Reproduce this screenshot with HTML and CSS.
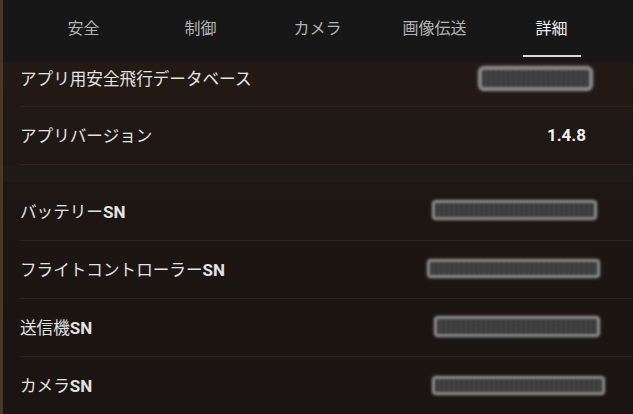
FILE: index.html
```html
<!DOCTYPE html>
<html lang="ja">
<head>
    <meta charset="UTF-8">
    <meta name="viewport" content="width=device-width, initial-scale=1.0">
    <title>詳細</title>
    <link rel="stylesheet" href="styles.css">
</head>
<body>
    <div class="panel">
        <nav class="tabs">
            <div class="tab">安全</div>
            <div class="tab">制御</div>
            <div class="tab">カメラ</div>
            <div class="tab">画像伝送</div>
            <div class="tab active">詳細</div>
        </nav>

        <div class="list">
            <div class="row first">
                <span class="label">アプリ用安全飛行データベース</span>
                <span class="redact r-db"></span>
            </div>
            <div class="row">
                <span class="label">アプリバージョン</span>
                <span class="value">1.4.8</span>
            </div>

            <div class="gap"></div>

            <div class="row">
                <span class="label">バッテリー<b>SN</b></span>
                <span class="redact r-bat"></span>
            </div>
            <div class="row">
                <span class="label">フライトコントローラー<b>SN</b></span>
                <span class="redact r-fc"></span>
            </div>
            <div class="row">
                <span class="label">送信機<b>SN</b></span>
                <span class="redact r-rc"></span>
            </div>
            <div class="row last">
                <span class="label">カメラ<b>SN</b></span>
                <span class="redact r-cam"></span>
            </div>
        </div>
    </div>
</body>
</html>
```

FILE: styles.css
```css
* {
    box-sizing: border-box;
}
html, body {
    margin: 0;
    height: 100%;
}
body {
    background: #1a1512;
    font-family: "Noto Sans CJK JP", "Noto Sans", sans-serif;
    color: #e4e4e4;
    overflow: hidden;
}
.panel {
    height: 414px;
    border-left: 3px solid #4a3825;
    background: linear-gradient(90deg, #1d1713 0%, #221a15 45%, #1c1613 100%);
}
.tabs {
    height: 62px;
    background: #171717;
    display: flex;
    padding: 0 23px 0 22px;
}
.tab {
    flex: 1;
    display: flex;
    align-items: flex-start;
    justify-content: center;
    padding-top: 15px;
    font-size: 16px;
    color: #b4b4b4;
    position: relative;
}
.tab.active {
    color: #f0f0f0;
}
.tab.active::after {
    content: "";
    position: absolute;
    left: 50%;
    bottom: 5px;
    width: 58px;
    margin-left: -29px;
    height: 2px;
    background: #d8d8d8;
}
.list {
    background: linear-gradient(180deg, #231a15 0%, #1d1613 40%, #1a1512 100%);
}
.row {
    height: 58px;
    margin-left: 17px;
    border-bottom: 1px solid #2b2521;
    display: flex;
    align-items: center;
    justify-content: space-between;
    padding-bottom: 2px;
}
.row.first {
    height: 45px;
    padding-bottom: 12px;
}
.row.last {
    border-bottom: none;
}
.gap {
    height: 18px;
    background: #211b17;
    border-bottom: 1px solid #1c1714;
}
.label {
    font-size: 16.6px;
    color: #e2e2e2;
}
.label b {
    font-family: Roboto, "Liberation Sans", sans-serif;
    font-weight: 700;
    font-size: 17px;
}
.value {
    font-family: Roboto, "Liberation Sans", sans-serif;
    font-weight: 700;
    font-size: 17px;
    color: #eeeeee;
    margin-right: 47px;
}
.redact {
    display: block;
    height: 20px;
    border: 3px solid #858585;
    border-radius: 4px;
    background: repeating-linear-gradient(90deg, #3b3b3b 0 3px, #454545 3px 5px);
    filter: blur(1px);
    box-shadow: 0 0 3px rgba(150, 150, 150, 0.6);
}
.r-db {
    width: 115px;
    height: 25px;
    border-width: 4px;
    border-radius: 6px;
    margin-right: 40px;
}
.r-bat {
    width: 165px;
    margin-right: 36px;
    margin-top: -2px;
}
.r-fc {
    width: 173px;
    height: 19px;
    margin-right: 33px;
}
.r-rc {
    width: 166px;
    height: 21px;
    margin-right: 33px;
}
.r-cam {
    width: 173px;
    height: 19px;
    margin-right: 28px;
}
```
